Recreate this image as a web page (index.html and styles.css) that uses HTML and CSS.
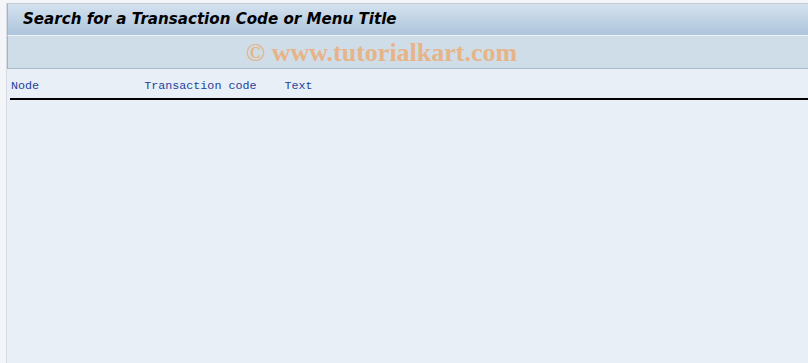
FILE: index.html
```html
<!DOCTYPE html>
<html lang="en">
<head>
    <meta charset="UTF-8">
    <title>Search for a Transaction Code or Menu Title</title>
    <link rel="stylesheet" href="styles.css">
</head>
<body>
    <div class="window">
        <div class="title-bar">
            <h1>Search for a Transaction Code or Menu Title</h1>
        </div>
        <div class="toolbar">
            <span class="watermark">&copy; www.tutorialkart.com</span>
        </div>
        <div class="content">
            <div class="list-header">
                <span class="col-node">Node</span>
                <span class="col-code">Transaction code</span>
                <span class="col-text">Text</span>
            </div>
        </div>
    </div>
</body>
</html>
```

FILE: styles.css
```css
/* Basic styles */
html, body {
    height: 100%;
}
body {
    margin: 0;
    background-color: #f4f5f8;
    font-family: "Liberation Sans", Arial, sans-serif;
    padding: 3px 0 0 6px;
    box-sizing: border-box;
}
.window {
    height: 100%;
    display: flex;
    flex-direction: column;
    border-left: 1px solid #d6dbe3;
    border-top: 1px solid #c3cbd6;
    background-color: #e8eff7;
}
.title-bar {
    height: 31px;
    border-left: 1px solid #a3b4c8;
    background: linear-gradient(to bottom, #d4e2ee, #adc4dc);
    border-bottom: 1px solid #eef4fa;
    display: flex;
    align-items: center;
}
.title-bar h1 {
    margin: -2px 0 0 15px;
    font-family: "DejaVu Sans", Verdana, sans-serif;
    font-size: 15.1px;
    font-weight: bold;
    font-style: italic;
    color: #000;
}
.toolbar {
    height: 32px;
    border-left: 1px solid #a3b4c8;
    background-color: #cfdde8;
    border-bottom: 1px solid #a9bacd;
    display: flex;
    align-items: center;
    justify-content: center;
}
.watermark {
    font-family: "Liberation Serif", "Times New Roman", serif;
    font-weight: bold;
    font-size: 26px;
    color: #e7b489;
    margin-left: -53px;
    margin-top: 1px;
}
.content {
    flex: 1;
    padding: 10px 0 0 3px;
}
.list-header {
    display: flex;
    font-family: "Liberation Mono", "Courier New", monospace;
    font-size: 11.7px;
    color: #1f3f9c;
    height: 21px;
    line-height: 14px;
    border-bottom: 2px solid #000;
    box-sizing: border-box;
    padding-left: 1px;
}
.col-node {
    width: 19ch;
}
.col-code {
    width: 20ch;
}
```
